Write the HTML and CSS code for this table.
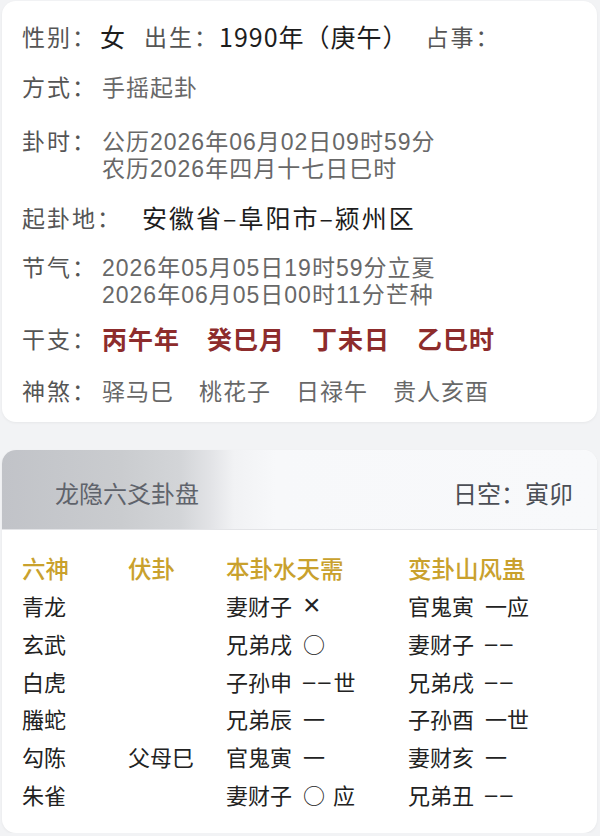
FILE: index.html
```html
<!DOCTYPE html>
<html lang="zh-CN">
<head>
<meta charset="utf-8">
<title>龙隐六爻卦盘</title>
<link rel="stylesheet" href="styles.css">
</head>
<body>
<div class="page">
  <section class="card info">
    <div class="row row-main">
      <span class="label">性别：</span><span class="strong sex">女</span>
      <span class="label birth-label">出生：</span><span class="strong">1990年（庚午）</span>
      <span class="label matter-label">占事：</span>
    </div>
    <div class="row row-up"><span class="label">方式：</span><span class="value">手摇起卦</span></div>
    <div class="row row-multi row-down">
      <span class="label">卦时：</span>
      <div class="value"><div>公历2026年06月02日09时59分</div><div>农历2026年四月十七日巳时</div></div>
    </div>
    <div class="row row-up"><span class="label">起卦地：</span><span class="strong place">安徽省–阜阳市–颍州区</span></div>
    <div class="row row-multi">
      <span class="label">节气：</span>
      <div class="value"><div>2026年05月05日19时59分立夏</div><div>2026年06月05日00时11分芒种</div></div>
    </div>
    <div class="row row-ganzhi">
      <span class="label">干支：</span>
      <div class="ganzhi"><span>丙午年</span><span>癸巳月</span><span>丁未日</span><span>乙巳时</span></div>
    </div>
    <div class="row">
      <span class="label">神煞：</span>
      <div class="value shensha"><span>驿马巳</span><span>桃花子</span><span>日禄午</span><span>贵人亥酉</span></div>
    </div>
  </section>

  <section class="card pan">
    <header class="pan-head">
      <span class="pan-title">龙隐六爻卦盘</span>
      <span class="pan-kong">日空：寅卯</span>
    </header>
    <div class="pan-body">
      <div class="yao-row yao-head"><span>六神</span><span>伏卦</span><span>本卦水天需</span><span>变卦山风蛊</span></div>
      <div class="yao-row"><span>青龙</span><span></span><span>妻财子<span class="mark"><span class="x">×</span></span></span><span>官鬼寅<span class="mark">一应</span></span></div>
      <div class="yao-row"><span>玄武</span><span></span><span>兄弟戌<span class="mark">○</span></span><span>妻财子<span class="mark"><span class="yin">––</span></span></span></div>
      <div class="yao-row"><span>白虎</span><span></span><span>子孙申<span class="mark"><span class="yin">––</span>世</span></span><span>兄弟戌<span class="mark"><span class="yin">––</span></span></span></div>
      <div class="yao-row"><span>螣蛇</span><span></span><span>兄弟辰<span class="mark">一</span></span><span>子孙酉<span class="mark">一世</span></span></div>
      <div class="yao-row"><span>勾陈</span><span>父母巳</span><span>官鬼寅<span class="mark">一</span></span><span>妻财亥<span class="mark">一</span></span></div>
      <div class="yao-row"><span>朱雀</span><span></span><span>妻财子<span class="mark">○<span class="ying">应</span></span></span><span>兄弟丑<span class="mark"><span class="yin">––</span></span></span></div>
    </div>
  </section>
</div>
</body>
</html>
```

FILE: styles.css
```css
html, body {
  margin: 0;
  padding: 0;
}

body {
  background: #f2f3f5;
  font-family: "Noto Sans CJK SC", "Noto Sans", sans-serif;
  color: #222;
}

.page {
  padding: 1px 3px 0 2px;
}

.card {
  background: #ffffff;
  border-radius: 14px;
  box-shadow: 0 1px 3px rgba(0, 0, 0, 0.05);
}

/* ---------- info card ---------- */
.info {
  display: flex;
  flex-direction: column;
  gap: 20px;
  padding: 19px 0 16px 20px;
}

.row {
  display: flex;
  align-items: flex-start;
  line-height: 32px;
  white-space: nowrap;
}

.row-up {
  margin-top: -2px;
}

.row-down {
  margin-top: 5px;
}

.row-ganzhi {
  margin-top: -7px;
}

.row-multi {
  line-height: 27px;
}

.row-multi .value {
  font-family: "Liberation Sans", "Noto Sans CJK SC", sans-serif;
  padding-top: 2px;
}

.label {
  flex: 0 0 auto;
  min-width: 80px;
  font-size: 23px;
  letter-spacing: 2px;
  color: #555555;
}

.value {
  font-size: 23px;
  letter-spacing: 1px;
  color: #686868;
}

.strong {
  font-size: 25px;
  letter-spacing: 1px;
  color: #1d1d1d;
}

.row-main .label {
  min-width: 0;
}

.sex {
  margin-left: 3px;
}

.birth-label {
  margin-left: 18px;
}

.matter-label {
  margin-left: 17px;
}

.place {
  margin-left: 20px;
  letter-spacing: 2px;
}

.ganzhi {
  display: flex;
  gap: 27px;
  font-size: 25px;
  font-weight: 700;
  letter-spacing: 1px;
  color: #8d2c2c;
}

.shensha {
  display: flex;
  gap: 25px;
}

/* ---------- pan card ---------- */
.pan {
  margin-top: 28px;
  overflow: hidden;
  padding-bottom: 19px;
}

.pan-head {
  height: 80px;
  box-sizing: border-box;
  padding: 6px 24px 0 53px;
  display: flex;
  justify-content: space-between;
  align-items: center;
  border-bottom: 1px solid #e3e4e7;
  background: linear-gradient(90deg, #c1c3c8 0%, #cacccf 20%, #d3d5d8 30%, #e2e3e6 35%, #f1f2f4 39%, #f7f8fa 46%, #f8f9fb 100%);
  font-size: 24px;
}

.pan-title {
  color: #5f636b;
}

.pan-kong {
  color: #4b4e55;
}

.pan-body {
  padding: 20px 0 0 20px;
}

.yao-row {
  display: grid;
  grid-template-columns: 106px 98px 182px 1fr;
  font-size: 22px;
  line-height: 37.8px;
  color: #222;
  white-space: nowrap;
}

.yao-head {
  font-size: 23.5px;
  font-weight: 500;
  line-height: 37px;
  color: #c9a12d;
}

.mark {
  margin-left: 11px;
}

.yin {
  font-family: "Liberation Sans", sans-serif;
  letter-spacing: 3px;
  vertical-align: 2px;
}

.x {
  font-family: "Liberation Sans", sans-serif;
  font-size: 30px;
  line-height: 0;
  font-weight: 300;
}

.ying {
  margin-left: 8px;
}
```
